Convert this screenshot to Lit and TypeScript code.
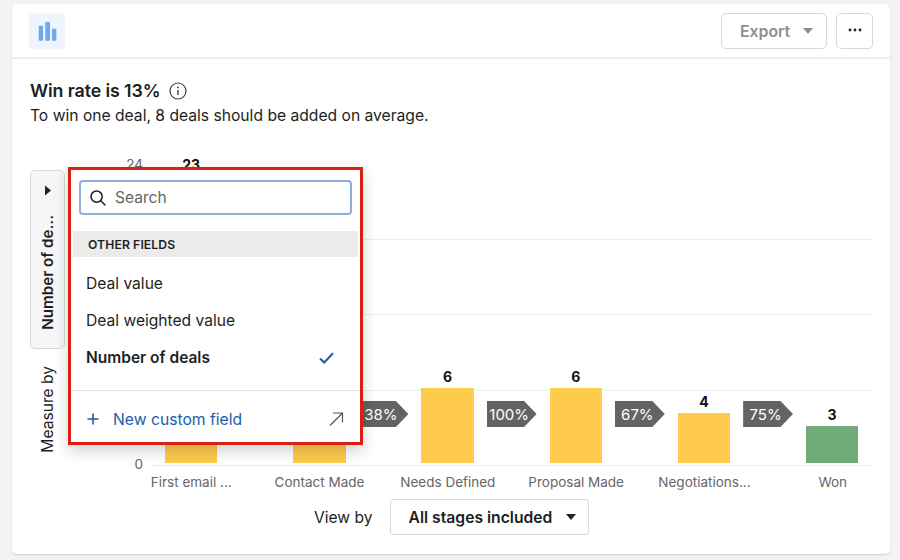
import { LitElement, html, css } from "lit";
import { customElement } from "lit/decorators.js";

const STAGES = [
  { label: "First email ...", value: 23, shown: "23", tag: " " },
  { label: "Contact Made", value: 16, shown: "", tag: "38%" },
  { label: "Needs Defined", value: 6, shown: "6", tag: "100%" },
  { label: "Proposal Made", value: 6, shown: "6", tag: "67%" },
  { label: "Negotiations...", value: 4, shown: "4", tag: "75%" },
  { label: "Won", value: 3, shown: "3", tag: "", won: true },
];

@customElement("app-root")
export class AppRoot extends LitElement {
  static styles = css`
    :host {
      display: block;
      width: 900px;
      height: 560px;
      box-sizing: border-box;
      padding: 4px 10px 6px 12px;
      background: #f3f3f3;
      font-family: Inter, "Liberation Sans", sans-serif;
      color: #1b1f23;
      overflow: hidden;
    }
    * { box-sizing: border-box; }
    .card {
      height: 550px;
      background: #fff;
      border-radius: 5px;
      box-shadow: 0 1px 2px rgba(0,0,0,.14);
      display: flex;
      flex-direction: column;
    }
    .head {
      height: 55px;
      flex: none;
      border-bottom: 2px solid #eeeeee;
      padding: 9px 17px 0 17px;
      display: flex;
      align-items: flex-start;
      gap: 9px;
    }
    .logo {
      width: 36px; height: 36px;
      border-radius: 4px;
      background: #eef5fd;
      display: flex; align-items: center; justify-content: center;
      margin-right: auto;
    }
    .btn {
      height: 36px;
      border: 1px solid #d9d9d9;
      border-radius: 5px;
      background: #fff;
      display: flex; align-items: center; justify-content: center;
    }
    .export {
      width: 106px;
      justify-content: flex-start;
      padding-left: 18px;
      gap: 13px;
      color: #8f8f8f;
      font-size: 15.8px;
      font-weight: 600;
    }
    .more { width: 37px; padding-bottom: 2px; }
    .body {
      flex: 1;
      padding: 20px 18px 18px 18px;
      display: flex;
      flex-direction: column;
    }
    .title {
      display: flex; align-items: center; gap: 9px;
      font-size: 17.8px; font-weight: 600; line-height: 24px;
      letter-spacing: -0.1px;
    }
    .sub { font-size: 15.65px; line-height: 23px; margin-top: 1px; }
    .chart {
      position: relative;
      margin-top: 28px;
      display: grid;
      grid-template-columns: 35px 78px 729px;
      grid-template-rows: 318px 18px;
    }
    .side {
      grid-row: 1 / span 2;
      padding-top: 15px;
      display: flex;
      flex-direction: column;
      align-items: center;
    }
    .tab {
      width: 35px; height: 179px;
      border: 1px solid #d9d9d9;
      border-radius: 5px;
      background: #f6f6f6;
      display: flex;
      flex-direction: column;
      align-items: center;
      justify-content: space-between;
      padding: 14px 0 18px;
    }
    .vert { writing-mode: vertical-rl; transform: rotate(180deg); white-space: nowrap; }
    .tab .vert { font-size: 15.2px; font-weight: 600; }
    .measure { font-size: 15.6px; margin-top: 17px; }
    .axis {
      display: flex;
      flex-direction: column;
      justify-content: space-between;
      align-items: flex-end;
      font-size: 13.5px;
      line-height: 18px;
      color: #666;
    }
    .plot {
      margin-left: 9px;
      width: 720px;
      display: grid;
      padding-bottom: 7px;
    }
    .lines, .bars { grid-area: 1 / 1; }
    .lines { padding-top: 9px; display: flex; flex-direction: column; }
    .line { flex: 1; border-bottom: 1px solid #ececec; }
    .bars {
      display: flex;
      align-items: flex-end;
      gap: 13px;
      padding: 0 13px 3px;
    }
    .col { width: 52.4px; display: flex; flex-direction: column; align-items: center; flex: none; }
    .val { font-size: 14px; font-weight: 700; line-height: 16px; margin-bottom: 3px; color: #111; }
    .bar { width: 100%; background: #ffcb4c; }
    .bar.won { background: #6fac78; }
    .tag {
      flex: none;
      width: 49.8px; height: 26px;
      margin-bottom: 36px;
      background: #636363;
      color: #fff;
      font-size: 15px;
      display: flex; align-items: center; justify-content: center;
      padding-right: 5px;
      clip-path: polygon(0 0, 75% 0, 100% 50%, 75% 100%, 0 100%);
    }
    .labels {
      grid-column: 3;
      margin-left: 9px;
      width: 720px;
      padding: 0 13px;
      display: flex;
      justify-content: space-between;
      font-size: 13.5px;
      line-height: 18px;
      color: #666;
    }
    .lab { width: 52.4px; display: flex; justify-content: center; white-space: nowrap; }
    .view {
      margin-top: 8px;
      padding-left: 284px;
      display: flex; align-items: center; gap: 17px;
      font-size: 15.6px;
    }
    .select {
      width: 199px; height: 36px;
      border: 1px solid #d9d9d9;
      border-radius: 3px;
      display: flex; align-items: center; gap: 14px;
      padding-left: 18px;
      font-size: 15.7px; font-weight: 600;
    }
    .pop {
      position: absolute;
      left: 38px; top: 12px;
      width: 295px; height: 278px;
      border: 3px solid #dc1f12;
      background: #fff;
      box-shadow: 0 6px 14px rgba(0,0,0,.18);
      display: flex; flex-direction: column;
      padding-top: 10px;
    }
    .search {
      margin: 0 8px;
      height: 35px;
      border: 2px solid #8db0d6;
      border-radius: 4px;
      display: flex; align-items: center; gap: 8px;
      padding-left: 8px;
      font-size: 15.6px;
      color: #666;
    }
    .group {
      margin: 16px 2px 8px;
      height: 26px;
      background: #ebebeb;
      display: flex; align-items: center;
      padding-left: 15px;
      font-size: 12.2px;
      font-weight: 600;
      letter-spacing: .1px;
    }
    .item {
      height: 37px;
      padding: 0 26px 0 15px;
      display: flex; align-items: center; justify-content: space-between;
      font-size: 15.6px;
    }
    .item.sel { font-weight: 600; font-size: 15.5px; }
    .foot {
      margin-top: auto;
      height: 52px;
      border-top: 1px solid #e4e4e4;
      display: flex; align-items: center;
      padding: 5px 16px 0 15px;
      gap: 13px;
      color: #1a5ea8;
      font-size: 15.7px;
    }
    .foot .arrow { margin-left: auto; display: flex; }
  `;

  render() {
    const caret = (c: string) => html`<svg width="10" height="6" viewBox="0 0 10 6"><path d="M0 0h10L5 6z" fill=${c}/></svg>`;
    return html`<div class="card">
      <div class="head">
        <div class="logo"><svg width="20" height="20" viewBox="0 0 20 20" fill="#6fa8ee">
          <rect x="1.7" y="4.7" width="4.4" height="15" rx=".8"/><rect x="8.3" y="1" width="4.7" height="18.7" rx=".8"/><rect x="15" y="7.7" width="4.3" height="12" rx=".8"/></svg></div>
        <div class="btn export">Export ${caret("#8f8f8f")}</div>
        <div class="btn more"><svg width="14" height="4" viewBox="0 0 14 4" fill="#222"><circle cx="2" cy="2" r="1.4"/><circle cx="7" cy="2" r="1.4"/><circle cx="12" cy="2" r="1.4"/></svg></div>
      </div>
      <div class="body">
        <div class="title">Win rate is 13%
          <svg width="18" height="18" viewBox="0 0 18 18" fill="none" stroke="#444" stroke-width="1.2"><circle cx="9" cy="9" r="8"/><path d="M9 8v5" stroke-width="1.4"/><circle cx="9" cy="5.4" r=".9" fill="#444" stroke="none"/></svg>
        </div>
        <div class="sub">To win one deal, 8 deals should be added on average.</div>
        <div class="chart">
          <div class="side">
            <div class="tab">
              <svg width="8" height="11" viewBox="0 0 8 11"><path d="M1 .5v10L7 5.5z" fill="#222"/></svg>
              <span class="vert">Number of de...</span>
            </div>
            <span class="vert measure">Measure by</span>
          </div>
          <div class="axis"><span>24</span><span>0</span></div>
          <div class="plot">
            <div class="lines">
              <div class="line"></div><div class="line"></div><div class="line"></div><div class="line"></div>
            </div>
            <div class="bars">
              ${STAGES.map(s => html`
                <div class="col">
                  <div class="val">${s.shown}</div>
                  <div class="bar ${s.won ? "won" : ""}" style="height:${s.value * 12.5}px"></div>
                </div>
                ${s.tag ? html`<div class="tag">${s.tag.trim()}</div>` : ""}
              `)}
            </div>
          </div>
          <div class="labels">${STAGES.map(s => html`<div class="lab">${s.label}</div>`)}</div>
          <div class="pop">
            <div class="search">
              <svg width="18" height="18" viewBox="0 0 18 18" fill="none" stroke="#1b1f23" stroke-width="1.5"><circle cx="7.6" cy="7.6" r="5.6"/><path d="M11.8 11.8L16 16" stroke-linecap="round"/></svg>
              Search
            </div>
            <div class="group">OTHER FIELDS</div>
            <div class="item">Deal value</div>
            <div class="item">Deal weighted value</div>
            <div class="item sel">Number of deals
              <svg width="15" height="12" viewBox="0 0 15 12" fill="none" stroke="#1a5ea8" stroke-width="2"><path d="M1 6.5l4.2 4L14 1.2"/></svg>
            </div>
            <div class="foot">
              <svg width="14" height="14" viewBox="0 0 14 14" stroke="#1a5ea8" stroke-width="1.6"><path d="M7 1.5v11M1.5 7h11"/></svg>
              New custom field
              <span class="arrow"><svg width="16" height="16" viewBox="0 0 16 16" fill="none" stroke="#555" stroke-width="1.2"><path d="M2 14.5L14.5 2M5 2h9.5v9.5"/></svg></span>
            </div>
          </div>
        </div>
        <div class="view">View by <div class="select">All stages included ${caret("#222")}</div></div>
      </div>
    </div>`;
  }
}
